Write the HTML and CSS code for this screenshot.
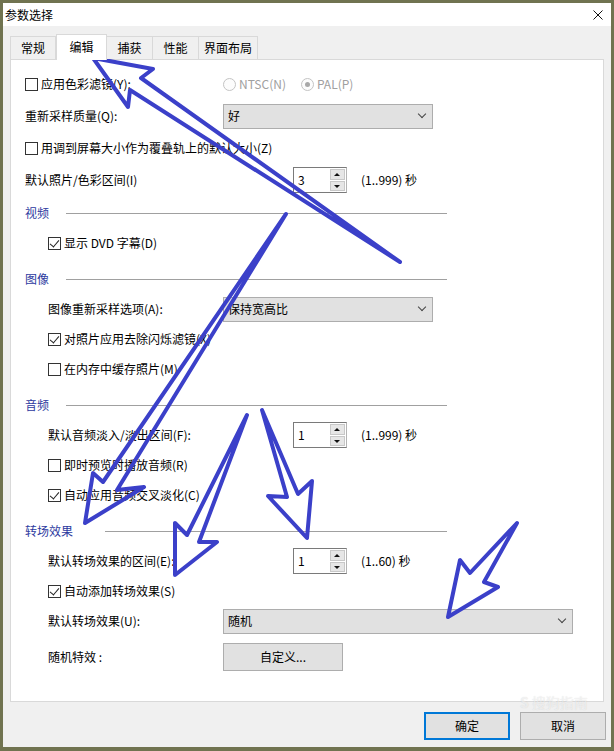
FILE: index.html
```html
<!DOCTYPE html>
<html lang="zh-CN">
<head>
    <meta charset="UTF-8">
    <meta name="viewport" content="width=device-width, initial-scale=1.0">
    <title>参数选择</title>
    <link rel="stylesheet" href="styles.css">
</head>
<body>
    <div class="window">
        <!-- 标题栏 -->
        <div class="titlebar">
            <span class="title">参数选择</span>
            <svg class="close" width="10" height="10" viewBox="0 0 10 10"><path d="M0.5 0.5 L9.5 9.5 M9.5 0.5 L0.5 9.5"/></svg>
        </div>

        <div class="client">
            <!-- 选项卡 -->
            <div class="tabs">
                <div class="tab">常规</div>
                <div class="tab active">编辑</div>
                <div class="tab">捕获</div>
                <div class="tab">性能</div>
                <div class="tab">界面布局</div>
            </div>

            <div class="panel">
                <div class="block top">
                    <div class="row">
                        <span class="check lbl"><i class="box"></i>应用色彩滤镜(Y):</span>
                        <span class="radio"><i class="dot"></i>NTSC(N)</span>
                        <span class="radio on"><i class="dot"></i>PAL(P)</span>
                    </div>
                    <div class="row">
                        <span class="lbl">重新采样质量(Q):</span>
                        <div class="select"><span>好</span><i class="chev"></i></div>
                    </div>
                    <div class="row">
                        <span class="check"><i class="box"></i>用调到屏幕大小作为覆叠轨上的默认大小(Z)</span>
                    </div>
                    <div class="row">
                        <span class="lbl wide">默认照片/色彩区间(I)</span>
                        <div class="spin"><span class="spin-val">3</span><span class="spin-btns"><i class="up"></i><i class="down"></i></span></div>
                        <span class="unit">(1..999) 秒</span>
                    </div>
                </div>

                <div class="sec first"><span>视频</span><i class="rule"></i></div>
                <div class="block sub">
                    <div class="row">
                        <span class="check"><i class="box on"></i>显示 DVD 字幕(D)</span>
                    </div>
                </div>

                <div class="sec"><span>图像</span><i class="rule"></i></div>
                <div class="block sub">
                    <div class="row">
                        <span class="lbl">图像重新采样选项(A):</span>
                        <div class="select"><span>保持宽高比</span><i class="chev"></i></div>
                    </div>
                    <div class="row">
                        <span class="check"><i class="box on"></i>对照片应用去除闪烁滤镜(X)</span>
                    </div>
                    <div class="row">
                        <span class="check"><i class="box"></i>在内存中缓存照片(M)</span>
                    </div>
                </div>

                <div class="sec"><span>音频</span><i class="rule"></i></div>
                <div class="block sub">
                    <div class="row">
                        <span class="lbl wide">默认音频淡入/淡出区间(F):</span>
                        <div class="spin"><span class="spin-val">1</span><span class="spin-btns"><i class="up"></i><i class="down"></i></span></div>
                        <span class="unit">(1..999) 秒</span>
                    </div>
                    <div class="row">
                        <span class="check"><i class="box"></i>即时预览时播放音频(R)</span>
                    </div>
                    <div class="row">
                        <span class="check"><i class="box on"></i>自动应用音频交叉淡化(C)</span>
                    </div>
                </div>

                <div class="sec wide"><span>转场效果</span><i class="rule"></i></div>
                <div class="block sub">
                    <div class="row">
                        <span class="lbl wide">默认转场效果的区间(E):</span>
                        <div class="spin"><span class="spin-val">1</span><span class="spin-btns"><i class="up"></i><i class="down"></i></span></div>
                        <span class="unit">(1..60) 秒</span>
                    </div>
                    <div class="row">
                        <span class="check"><i class="box on"></i>自动添加转场效果(S)</span>
                    </div>
                    <div class="row">
                        <span class="lbl">默认转场效果(U):</span>
                        <div class="select long"><span>随机</span><i class="chev"></i></div>
                    </div>
                    <div class="row gap">
                        <span class="lbl">随机特效 :</span>
                        <button class="btn custom">自定义...</button>
                    </div>
                </div>
            </div>

            <!-- 底部按钮 -->
            <div class="buttons">
                <button class="btn default">确定</button>
                <button class="btn">取消</button>
            </div>
        </div>
    </div>

    <!-- 手绘箭头 -->
    <svg class="arrows" width="614" height="751" viewBox="0 0 614 751">
        <path d="M93 58 L153 69 L141 78 L400 262 L130 90 L128 107 Z"/>
        <path d="M286 214 L103 482 L93 473 L85 523 L144 487 L117 490 Z"/>
        <path d="M247 415 L187 535 L175 523 L175 575 L217 542 L199 542 Z"/>
        <path d="M262 410 L287 497 L268 496 L307 538 L312 481 L298 494 Z"/>
        <path d="M517 523 L470 573 L460 560 L448 617 L498 587 L484 582 Z"/>
    </svg>

    <div class="watermark"><b>S</b>搜狗指南</div>
</body>
</html>
```

FILE: styles.css
```css
/* 页面基础样式 */
body {
    margin: 0;
    background: #707350;
    font-family: "Noto Sans CJK SC", sans-serif;
    font-size: 12px;
    line-height: 16px;
    color: #000;
    position: relative;
}
.window {
    margin: 3px 3px 4px;
    height: 744px;
    display: flex;
    flex-direction: column;
    background: #f0f0f0;
}
/* 标题栏 */
.titlebar {
    height: 23px;
    flex: none;
    background: #fff;
    display: flex;
    align-items: center;
    justify-content: space-between;
    padding: 0 8px 0 2px;
}
.close path {
    stroke: #111;
    stroke-width: 1;
    fill: none;
}
.client {
    flex: 1;
    display: flex;
    flex-direction: column;
    padding: 10px 7px 7px;
}
/* 选项卡 */
.tabs {
    display: flex;
    align-items: flex-end;
    height: 23px;
    position: relative;
    z-index: 1;
}
.tab {
    height: 23px;
    min-width: 46px;
    box-sizing: border-box;
    padding: 0 5px;
    border: 1px solid #d9d9d9;
    border-bottom: none;
    display: flex;
    align-items: center;
    justify-content: center;
    background: #f0f0f0;
}
.tab + .tab {
    border-left: none;
}
.tab.active {
    height: 26px;
    min-width: 51px;
    margin-bottom: -1px;
    background: #fff;
    border-left: 1px solid #d9d9d9;
    padding-bottom: 2px;
}
.panel {
    height: 643px;
    box-sizing: border-box;
    border: 1px solid #d9d9d9;
    background: #fff;
    padding: 8px 14px 0;
}
/* 行 */
.row {
    display: flex;
    align-items: center;
    height: 30px;
}
.top .row {
    height: 32px;
}
.row.gap {
    margin-top: 6px;
}
.sub {
    padding-left: 23px;
}
.lbl {
    width: 198px;
    flex: none;
}
.lbl.wide {
    width: 268px;
}
.sub .lbl {
    width: 175px;
}
.sub .lbl.wide {
    width: 245px;
}
/* 分组标题 */
.sec {
    display: flex;
    align-items: center;
    width: 422px;
    height: 30px;
    margin-top: 6px;
    color: #2d3aa0;
}
.sec.first {
    margin-top: 2px;
}
.sec .rule {
    flex: 1;
    height: 1px;
    margin-left: 17px;
    background: #a0a0a0;
}
.sec.wide .rule {
    margin-left: 32px;
}
/* 复选框 */
.check {
    display: flex;
    align-items: center;
}
.box {
    width: 13px;
    height: 13px;
    box-sizing: border-box;
    border: 1px solid #333;
    background: #fff;
    margin-right: 3px;
    position: relative;
    flex: none;
}
.box.on::after {
    content: '';
    position: absolute;
    left: 3px;
    top: 0px;
    width: 4px;
    height: 8px;
    border: solid #222;
    border-width: 0 1.3px 1.3px 0;
    transform: rotate(40deg);
}
/* 单选框 (禁用) */
.radio {
    display: flex;
    align-items: center;
    color: #a0a0a0;
    margin-right: 15px;
}
.dot {
    width: 13px;
    height: 13px;
    box-sizing: border-box;
    border: 1px solid #c4c4c4;
    border-radius: 50%;
    margin-right: 3px;
    position: relative;
    background: #fcfcfc;
}
.radio.on .dot::after {
    content: '';
    position: absolute;
    left: 3px;
    top: 3px;
    width: 5px;
    height: 5px;
    border-radius: 50%;
    background: #a8a8a8;
}
/* 下拉框 */
.select {
    width: 210px;
    height: 25px;
    box-sizing: border-box;
    border: 1px solid #adadad;
    background: #e1e1e1;
    display: flex;
    align-items: center;
    justify-content: space-between;
    padding: 0 7px 0 4px;
}
.select.long {
    width: 350px;
}
.chev {
    width: 5px;
    height: 5px;
    border: solid #444;
    border-width: 0 1px 1px 0;
    transform: rotate(45deg);
    margin-top: -4px;
}
/* 数值框 */
.spin {
    display: flex;
    height: 26px;
    width: 54px;
    box-sizing: border-box;
    border: 1px solid #7a7a7a;
    border-right-color: #b4b4b4;
}
.spin-val {
    flex: 1;
    display: flex;
    align-items: center;
    padding-left: 4px;
}
.spin-btns {
    width: 16px;
    display: flex;
    flex-direction: column;
    gap: 1px;
    padding: 1px 1px 1px 0;
    box-sizing: border-box;
}
.spin-btns i {
    flex: 1;
    background: #e6e6e6;
    border: 1px solid #c8c8c8;
    position: relative;
}
.spin-btns i::after {
    content: '';
    position: absolute;
    left: 3px;
    top: 3px;
    border-left: 3px solid transparent;
    border-right: 3px solid transparent;
}
.spin-btns .up::after {
    border-bottom: 3px solid #111;
}
.spin-btns .down::after {
    border-top: 3px solid #111;
}
.unit {
    margin-left: 14px;
}
/* 按钮 */
.btn {
    width: 86px;
    height: 28px;
    box-sizing: border-box;
    border: 1px solid #adadad;
    background: #e1e1e1;
    font: inherit;
    color: #000;
    padding: 0;
}
.btn.custom {
    width: 120px;
}
.btn.default {
    border: 2px solid #0078d7;
}
.buttons {
    display: flex;
    justify-content: flex-end;
    gap: 10px;
    margin-top: 10px;
    margin-right: -2px;
}
/* 箭头覆盖层 */
.arrows {
    position: absolute;
    top: 0;
    left: 0;
    pointer-events: none;
}
.arrows path {
    fill: none;
    stroke: #3b40c9;
    stroke-width: 4;
    stroke-linejoin: round;
    stroke-linecap: round;
}
/* 水印 */
.watermark {
    position: absolute;
    left: 520px;
    top: 694px;
    font-size: 14px;
    line-height: 16px;
    color: rgba(255, 255, 255, 0.6);
    text-shadow: 0 0 1px rgba(0, 0, 0, 0.15);
    pointer-events: none;
}
.watermark b {
    margin-right: 3px;
}
```
